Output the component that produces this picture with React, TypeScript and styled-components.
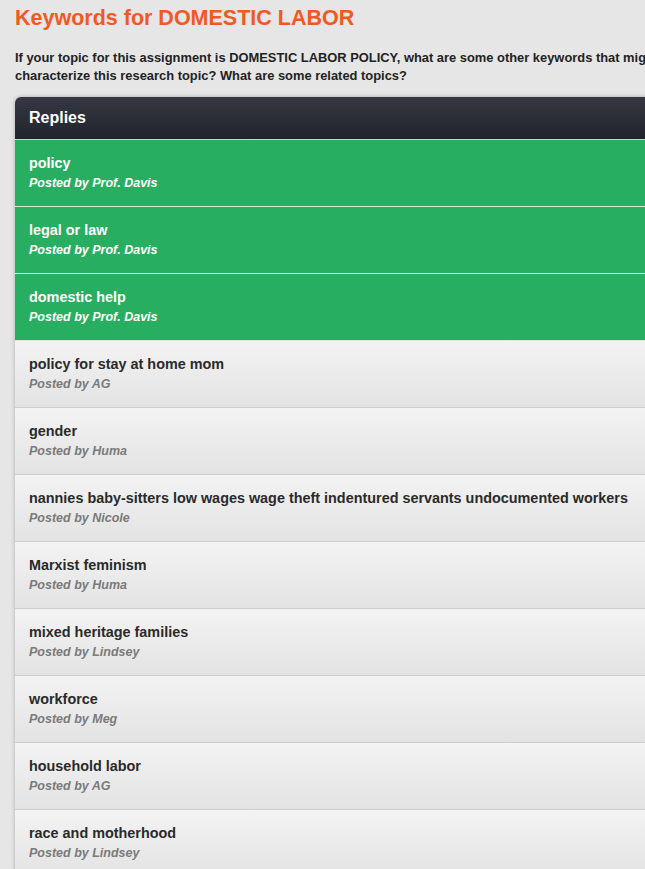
import { createGlobalStyle } from "styled-components";
import styled from "styled-components";

const GlobalStyle = createGlobalStyle`
  html, body {
    margin: 0;
    padding: 0;
    background: #e6e6e6;
    overflow: hidden;
    font-family: "Liberation Sans", Arial, Helvetica, sans-serif;
  }
`;

const Page = styled.div`
  width: 730px;
  padding: 6px 15px 0 15px;
`;

const Title = styled.h1`
  margin: 0;
  font-size: 21.5px;
  line-height: 24px;
  font-weight: bold;
  color: #ef5a24;
`;

const Prompt = styled.p`
  margin: 19px 0 12px;
  font-size: 12.9px;
  line-height: 18px;
  font-weight: bold;
  color: #222;
`;

const Panel = styled.section`
  border-radius: 6px 6px 0 0;
  overflow: hidden;
  box-shadow: 0 0 4px rgba(0, 0, 0, 0.25);
`;

const PanelHeader = styled.div`
  height: 42px;
  display: flex;
  align-items: center;
  padding: 0 14px;
  background: linear-gradient(#353842, #22242c);
  color: #fff;
  font-size: 16px;
  font-weight: bold;
  border-bottom: 1px solid #cfcfcf;
`;

const Row = styled.div<{ $staff: boolean }>`
  padding: 15px 14px 15px;
  border-bottom: 1px solid ${({ $staff }) => ($staff ? "#d6e8dc" : "#cdcdcd")};
  background: ${({ $staff }) =>
    $staff ? "#27ae60" : "linear-gradient(#f3f3f3, #e3e3e3)"};
  color: ${({ $staff }) => ($staff ? "#fff" : "#2a2a2a")};
`;

const ReplyText = styled.div`
  font-size: 14.4px;
  line-height: 17px;
  font-weight: bold;
`;

const Byline = styled.div<{ $staff: boolean }>`
  margin-top: 3px;
  font-size: 12.5px;
  line-height: 16px;
  font-weight: bold;
  font-style: italic;
  color: ${({ $staff }) => ($staff ? "#fff" : "#7a7a7a")};
`;

const replies = [
  { text: "policy", by: "Prof. Davis", staff: true },
  { text: "legal or law", by: "Prof. Davis", staff: true },
  { text: "domestic help", by: "Prof. Davis", staff: true },
  { text: "policy for stay at home mom", by: "AG", staff: false },
  { text: "gender", by: "Huma", staff: false },
  {
    text: "nannies baby-sitters low wages wage theft indentured servants undocumented workers",
    by: "Nicole",
    staff: false,
  },
  { text: "Marxist feminism", by: "Huma", staff: false },
  { text: "mixed heritage families", by: "Lindsey", staff: false },
  { text: "workforce", by: "Meg", staff: false },
  { text: "household labor", by: "AG", staff: false },
  { text: "race and motherhood", by: "Lindsey", staff: false },
  { text: "caregiving", by: "Meg", staff: false },
];

export default function App() {
  return (
    <>
      <GlobalStyle />
      <Page>
        <Title>Keywords for DOMESTIC LABOR</Title>
        <Prompt>
          If your topic for this assignment is DOMESTIC LABOR POLICY, what are
          some other keywords that might be used to characterize this research
          topic? What are some related topics?
        </Prompt>
        <Panel>
          <PanelHeader>Replies</PanelHeader>
          {replies.map((r, i) => (
            <Row key={i} $staff={r.staff}>
              <ReplyText>{r.text}</ReplyText>
              <Byline $staff={r.staff}>Posted by {r.by}</Byline>
            </Row>
          ))}
        </Panel>
      </Page>
    </>
  );
}
